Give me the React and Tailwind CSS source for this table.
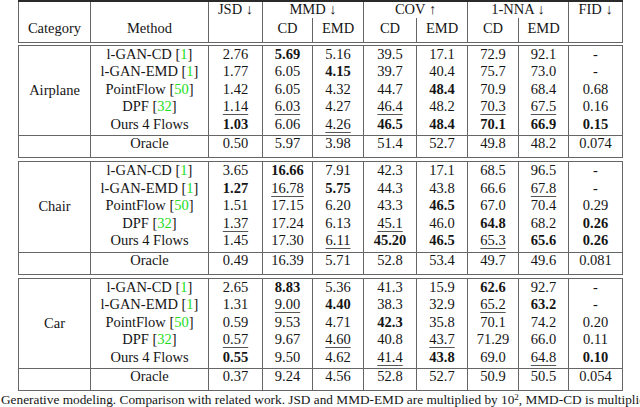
import React from 'react';

// column widths in px, left to right
const widths = [72, 118, 54, 50, 51, 53, 51, 51, 50, 54];

// "b:" bold, "u:" underlined
const blocks = [
  {
    category: 'Airplane',
    rows: [
      ['l-GAN-CD', '1', ['2.76', 'b:5.69', '5.16', '39.5', '17.1', '72.9', '92.1', '-']],
      ['l-GAN-EMD', '1', ['1.77', '6.05', 'b:4.15', '39.7', '40.4', '75.7', '73.0', '-']],
      ['PointFlow', '50', ['1.42', '6.05', '4.32', '44.7', 'b:48.4', '70.9', '68.4', '0.68']],
      ['DPF', '32', ['u:1.14', 'u:6.03', '4.27', 'u:46.4', '48.2', 'u:70.3', 'u:67.5', '0.16']],
      ['Ours 4 Flows', null, ['b:1.03', '6.06', 'u:4.26', 'b:46.5', 'b:48.4', 'b:70.1', 'b:66.9', 'b:0.15']],
    ],
    oracle: ['0.50', '5.97', '3.98', '51.4', '52.7', '49.8', '48.2', '0.074'],
  },
  {
    category: 'Chair',
    rows: [
      ['l-GAN-CD', '1', ['3.65', 'b:16.66', '7.91', '42.3', '17.1', '68.5', '96.5', '-']],
      ['l-GAN-EMD', '1', ['b:1.27', 'u:16.78', 'b:5.75', '44.3', '43.8', '66.6', 'u:67.8', '-']],
      ['PointFlow', '50', ['1.51', '17.15', '6.20', '43.3', 'b:46.5', '67.0', '70.4', '0.29']],
      ['DPF', '32', ['u:1.37', '17.24', '6.13', 'u:45.1', '46.0', 'b:64.8', '68.2', 'b:0.26']],
      ['Ours 4 Flows', null, ['1.45', '17.30', 'u:6.11', 'b:45.20', 'b:46.5', 'u:65.3', 'b:65.6', 'b:0.26']],
    ],
    oracle: ['0.49', '16.39', '5.71', '52.8', '53.4', '49.7', '49.6', '0.081'],
  },
  {
    category: 'Car',
    rows: [
      ['l-GAN-CD', '1', ['2.65', 'b:8.83', '5.36', '41.3', '15.9', 'b:62.6', '92.7', '-']],
      ['l-GAN-EMD', '1', ['1.31', 'u:9.00', 'b:4.40', '38.3', '32.9', 'u:65.2', 'b:63.2', '-']],
      ['PointFlow', '50', ['0.59', '9.53', '4.71', 'b:42.3', '35.8', '70.1', '74.2', '0.20']],
      ['DPF', '32', ['u:0.57', '9.67', 'u:4.60', '40.8', 'u:43.7', '71.29', '66.0', '0.11']],
      ['Ours 4 Flows', null, ['b:0.55', '9.50', '4.62', 'u:41.4', 'b:43.8', '69.0', 'u:64.8', 'b:0.10']],
    ],
    oracle: ['0.37', '9.24', '4.56', '52.8', '52.7', '50.9', '50.5', '0.054'],
  },
];

const Cols = () => (
  <colgroup>
    {widths.map((w, i) => (
      <col key={i} style={{ width: w }} />
    ))}
  </colgroup>
);

const Value = ({ v }) => {
  if (v.startsWith('b:')) return <span className="font-bold">{v.slice(2)}</span>;
  if (v.startsWith('u:'))
    return (
      <span className="underline decoration-[#555] decoration-1 underline-offset-[3px]">{v.slice(2)}</span>
    );
  return v;
};

const Method = ({ name, cite }) => (
  <>
    {name}
    {cite && (
      <>
        {' '}[<span className="text-[#22dd22]">{cite}</span>]
      </>
    )}
  </>
);

const cell = 'border-x border-[#666] p-0 text-center align-top';
const cell2 = 'border-x border-[#666] p-0 pt-[2px] text-center align-top';

const Block = ({ block }) => (
  <table className="table-fixed border-collapse border border-[#666] w-[604px]">
    <Cols />
    <tbody>
      {block.rows.map(([name, cite, vals], i) => {
        // last method row keeps a little room above the Oracle line
        const pad = i === 4 ? ' pb-[2px]' : '';
        return (
          <tr key={name} className="h-[17.5px]">
            {i === 0 && (
              <td rowSpan={5} className="border-x border-[#666] p-0 text-center align-middle">
                {block.category}
              </td>
            )}
            <td className={cell + pad}>
              <Method name={name} cite={cite} />
            </td>
            {vals.map((v, j) => (
              <td key={j} className={cell + pad}>
                <Value v={v} />
              </td>
            ))}
          </tr>
        );
      })}
      <tr className="h-[22px] border-t border-[#666] leading-[14px]">
        <td className={cell}></td>
        <td className={cell}>Oracle</td>
        {block.oracle.map((v, j) => (
          <td key={j} className={cell}>
            {v}
          </td>
        ))}
      </tr>
    </tbody>
  </table>
);

export default function App() {
  return (
    <div className="w-[640px] h-[407px] overflow-hidden bg-white text-[#151515] font-['Liberation_Serif',serif] text-[14.5px] leading-[17.5px]">
      <div className="pl-[18px] flex flex-col gap-[2px]">
        {/* header */}
        <table className="table-fixed border-collapse border border-[#666] border-t-2 border-t-[#2a2a2a] w-[604px]">
          <Cols />
          <tbody>
            <tr className="h-[17px] leading-[14px]">
              <td className={cell}></td>
              <td className={cell}></td>
              <td className={cell}>JSD ↓</td>
              <td colSpan={2} className={cell}>MMD ↓</td>
              <td colSpan={2} className={cell}>COV ↑</td>
              <td colSpan={2} className={cell}>1-NNA ↓</td>
              <td className={cell}>FID ↓</td>
            </tr>
            <tr className="h-[24px]">
              <td className={cell2}>Category</td>
              <td className={cell2}>Method</td>
              <td className={cell2}></td>
              <td className={cell2}>CD</td>
              <td className={cell2}>EMD</td>
              <td className={cell2}>CD</td>
              <td className={cell2}>EMD</td>
              <td className={cell2}>CD</td>
              <td className={cell2}>EMD</td>
              <td className={cell2}></td>
            </tr>
          </tbody>
        </table>
        <div className="flex flex-col gap-[3px]">
          {blocks.map((b) => (
            <Block key={b.category} block={b} />
          ))}
        </div>
      </div>
      <p className="pl-[1px] whitespace-nowrap text-[13.3px]">
        Generative modeling. Comparison with related work. JSD and MMD-EMD are multiplied by 10
        <sup className="text-[9px]">2</sup>, MMD-CD is multiplied by 10<sup className="text-[9px]">4</sup>.
      </p>
    </div>
  );
}
